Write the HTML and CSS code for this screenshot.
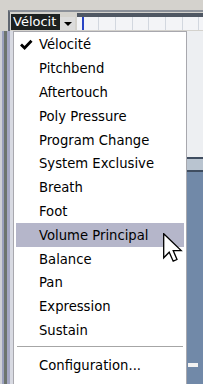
FILE: index.html
```html
<!DOCTYPE html>
<html lang="fr">
<head>
    <meta charset="UTF-8">
    <title>Vélocité</title>
    <link rel="stylesheet" href="styles.css">
</head>
<body>

<div class="toolbar">
    <div class="tool-gutter"></div>
    <div class="tool-body">
        <div class="sel">Vélocit</div>
        <div class="drop"><span class="tri"></span></div>
        <div class="grid-wrap">
            <div class="grid"><div class="cells"></div></div>
        </div>
    </div>
</div>

<div class="main">
    <div class="left-strip"></div>

    <div class="menu">
        <div class="item">
            <span class="mark">
                <svg width="13" height="12" viewBox="0 0 13 12"><polyline points="1,5.5 4.6,9 11.5,1.8" fill="none" stroke="#000" stroke-width="2.8"/></svg>
            </span>
            Vélocité
        </div>
        <div class="item"><span class="mark"></span>Pitchbend</div>
        <div class="item"><span class="mark"></span>Aftertouch</div>
        <div class="item"><span class="mark"></span>Poly Pressure</div>
        <div class="item"><span class="mark"></span>Program Change</div>
        <div class="item"><span class="mark"></span>System Exclusive</div>
        <div class="item"><span class="mark"></span>Breath</div>
        <div class="item"><span class="mark"></span>Foot</div>
        <div class="item hover">
            <span class="mark"></span>Volume Principal
            <!-- pointeur de la souris -->
            <svg class="pointer" width="20" height="30" viewBox="0 0 20 30"><polygon points="0.7,0.7 0.7,24.8 6.2,19.2 10.2,28.2 14,26.5 10.2,17.6 18.2,17.6" fill="#fff" stroke="#000" stroke-width="1.3" stroke-linejoin="miter"/></svg>
        </div>
        <div class="item"><span class="mark"></span>Balance</div>
        <div class="item"><span class="mark"></span>Pan</div>
        <div class="item"><span class="mark"></span>Expression</div>
        <div class="item"><span class="mark"></span>Sustain</div>
        <div class="sep"></div>
        <div class="item"><span class="mark"></span>Configuration...</div>
    </div>

    <div class="right-strip"></div>
</div>

</body>
</html>
```

FILE: styles.css
```css
body {
    margin: 0;
    width: 203px;
    height: 384px;
    overflow: hidden;
    background-color: #d4d2cd;
    font-family: "DejaVu Sans", Verdana, sans-serif;
    font-size: 13.2px;
    color: #000;
}
.toolbar {
    height: 31px;
    display: flex;
    background-color: #d4d2cd;
}
.tool-gutter {
    width: 8px;
}
.tool-body {
    flex: 1;
    margin-top: 10px;
    border-top: 2px solid #8b9099;
    border-left: 2px solid #5f6670;
    display: flex;
}
.sel {
    margin-left: 1px;
    margin-top: 2px;
    width: 47px;
    height: 16px;
    padding-left: 2px;
    background-color: #1d2121;
    color: #fff;
    font-size: 13px;
    line-height: 16px;
    white-space: nowrap;
}
.drop {
    margin-top: 5px;
    width: 15px;
    height: 13px;
    background-color: #dcdcdc;
    display: flex;
    justify-content: center;
    align-items: center;
}
.tri {
    width: 0;
    height: 0;
    border-left: 4px solid transparent;
    border-right: 4px solid transparent;
    border-top: 4px solid #000;
}
.grid-wrap {
    flex: 1;
    margin-left: 2px;
    margin-top: 1px;
    border-top: 4px solid #4f5763;
    display: flex;
    flex-direction: column;
}
.grid {
    height: 13px;
    padding-left: 5px;
    background-color: #f3f4f7;
}
.cells {
    height: 100%;
    border-left: 2px solid #2844c4;
    background: repeating-linear-gradient(to right, transparent 0 14.2px, #d2d7df 14.2px 15.2px, transparent 15.2px 16.7px);
}
.main {
    display: flex;
    height: 353px;
}
.left-strip {
    width: 13px;
    background: linear-gradient(to right, #cfd0d6 0 2px, #9aa0bd 2px 4px, #6c746e 4px 7px, #a4a7c3 7px 10px, #d8dae2 10px 13px);
}
.menu {
    width: 174px;
    box-sizing: border-box;
    border: 1px solid #a8a8ae;
    border-bottom: none;
    padding: 1px 2px 40px;
    background-color: #fff;
}
.item {
    position: relative;
    height: 23.8px;
    display: flex;
    align-items: center;
    white-space: nowrap;
}
.item.hover {
    background-color: #b5b6ca;
}
.mark {
    width: 23px;
    display: flex;
}
.mark svg {
    margin-left: 4px;
}
.sep {
    height: 1px;
    margin: 4px 1px 6px;
    background-color: #a6a6a6;
}
.pointer {
    position: absolute;
    left: 147px;
    top: 10px;
}
.right-strip {
    flex: 1;
    background:
        linear-gradient(#f2f2f2, #f2f2f2) 1px 332px / 10px 4px no-repeat,
        linear-gradient(to bottom, #edeff2 0 126px, #3f4d60 126px 128px, #b9c4d0 128px 139px, #3f4d60 139px 141px, #7189a8 141px);
}
```
